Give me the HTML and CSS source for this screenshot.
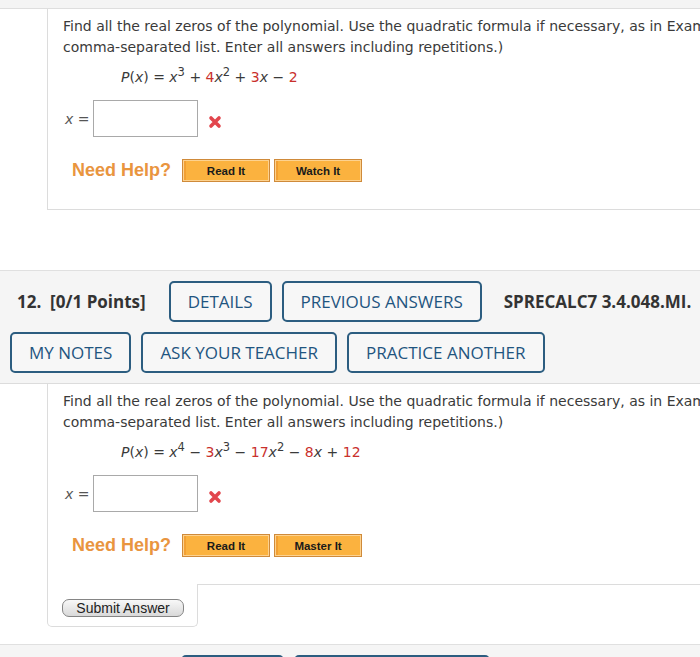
FILE: index.html
```html
<!DOCTYPE html>
<html>
<head>
<meta charset="utf-8">
<link rel="stylesheet" href="styles.css">
</head>
<body>
<div class="page">
  <div class="topband"></div>

  <div class="qbody">
    <div class="panel">
      <p class="prompt">Find all the real zeros of the polynomial. Use the quadratic formula if necessary, as in Example 3(a). (Enter your answers as a<br>comma-separated list. Enter all answers including repetitions.)</p>
      <div class="formula"><i>P</i>(<i>x</i>) = <i>x</i><span class="sup">3</span> + <span class="num">4</span><i>x</i><span class="sup">2</span> + <span class="num">3</span><i>x</i> − <span class="num">2</span></div>
      <div class="answer">
        <span class="label"><i>x</i> =</span>
        <span class="input"></span>
        <svg class="xmark" width="14" height="14" viewBox="0 0 14 14"><path d="M3 3 L11 11 M11 3 L3 11" stroke="#e2464d" stroke-width="3.6" stroke-linecap="round"/></svg>
      </div>
      <div class="help">
        <span class="needhelp">Need Help?</span>
        <span class="hbtn">Read It</span>
        <span class="hbtn">Watch It</span>
      </div>
    </div>
  </div>

  <div class="qhead first">
    <div class="hrow">
      <span class="qnum">12.&nbsp; [0/1 Points]</span>
      <span class="btn">DETAILS</span>
      <span class="btn">PREVIOUS ANSWERS</span>
      <span class="qid">SPRECALC7 3.4.048.MI.</span>
    </div>
    <div class="hrow">
      <span class="btn">MY NOTES</span>
      <span class="btn">ASK YOUR TEACHER</span>
      <span class="btn">PRACTICE ANOTHER</span>
    </div>
  </div>

  <div class="qbody">
    <div class="panel open">
      <p class="prompt">Find all the real zeros of the polynomial. Use the quadratic formula if necessary, as in Example 3(a). (Enter your answers as a<br>comma-separated list. Enter all answers including repetitions.)</p>
      <div class="formula"><i>P</i>(<i>x</i>) = <i>x</i><span class="sup">4</span> − <span class="num">3</span><i>x</i><span class="sup">3</span> − <span class="num">17</span><i>x</i><span class="sup">2</span> − <span class="num">8</span><i>x</i> + <span class="num">12</span></div>
      <div class="answer">
        <span class="label"><i>x</i> =</span>
        <span class="input"></span>
        <svg class="xmark" width="14" height="14" viewBox="0 0 14 14"><path d="M3 3 L11 11 M11 3 L3 11" stroke="#e2464d" stroke-width="3.6" stroke-linecap="round"/></svg>
      </div>
      <div class="help">
        <span class="needhelp">Need Help?</span>
        <span class="hbtn">Read It</span>
        <span class="hbtn">Master It</span>
      </div>
    </div>
    <div class="qfoot">
      <div class="tab"><span class="submit">Submit Answer</span></div>
      <div class="fill"></div>
    </div>
  </div>

  <div class="qhead next">
    <div class="hrow">
      <span class="qnum wide">13.&nbsp; [-/1 Points]</span>
      <span class="btn">DETAILS</span>
      <span class="btn">ASK YOUR TEACHER</span>
    </div>
  </div>
</div>
</body>
</html>
```
FILE: styles.css
```css
html, body {
  margin: 0;
  padding: 0;
  overflow: hidden;
  background: #ffffff;
}

.page {
  width: 1000px;
  font-family: "DejaVu Sans", Verdana, sans-serif;
  color: #3a3a3a;
}

.topband {
  height: 8px;
  background: #f4f4f4;
  border-bottom: 1px solid #dedede;
}

.qbody {
  margin-left: 47px;
}

.panel {
  border-left: 1px solid #dcdcdc;
  border-bottom: 1px solid #dcdcdc;
  padding: 7px 0 27px 15px;
}

.panel.open {
  border-bottom: none;
}

.prompt {
  margin: 0;
  font-size: 14px;
  line-height: 21px;
  white-space: nowrap;
}

.formula {
  margin: 8px 0 0 58px;
  font-size: 14px;
  line-height: 22px;
  height: 22px;
  white-space: nowrap;
}

.formula i {
  font-style: italic;
}

.num {
  color: #c9302c;
}

.sup {
  font-size: 11.5px;
  position: relative;
  top: -6px;
}

.answer {
  display: flex;
  align-items: center;
  margin-top: 12px;
  height: 37px;
}

.label {
  width: 28px;
  margin-left: 2px;
  font-size: 14px;
  color: #555;
}

.input {
  width: 105px;
  height: 37px;
  box-sizing: border-box;
  border: 1px solid #a9a9a9;
  background: #fff;
}

.xmark {
  margin-left: 10px;
  margin-top: 6px;
}

.help {
  display: flex;
  align-items: center;
  margin-top: 22px;
  height: 23px;
}

.needhelp {
  margin-left: 9px;
  margin-right: 11px;
  font-family: "Liberation Sans", Arial, sans-serif;
  font-weight: 700;
  font-size: 18px;
  color: #e9953f;
}

.hbtn {
  width: 88px;
  height: 23px;
  box-sizing: border-box;
  margin-right: 4px;
  display: flex;
  align-items: center;
  justify-content: center;
  border: 1px solid #cf8a3a;
  background: #fbb23f;
  box-shadow: inset 0 0 0 1px #fdd28f, inset 3px 0 0 0 #f2a033;
  font-family: "Liberation Sans", Arial, sans-serif;
  font-weight: 700;
  font-size: 11.5px;
  color: #1a1a1a;
}

.qfoot {
  display: flex;
}

.tab {
  width: 151px;
  box-sizing: border-box;
  border: 1px solid #dcdcdc;
  border-top: none;
  border-radius: 0 0 5px 5px;
  padding: 15px 0 9px 14px;
}

.submit {
  display: block;
  width: 122px;
  height: 18px;
  box-sizing: border-box;
  border: 1px solid #858585;
  border-radius: 7px;
  background: linear-gradient(#f8f8f8, #d9d9d9);
  font-family: "Liberation Sans", Arial, sans-serif;
  font-size: 14px;
  line-height: 16px;
  text-align: center;
  color: #222;
}

.fill {
  flex: 1;
  border-top: 1px solid #dcdcdc;
}

.qhead {
  background: #f5f5f5;
  border-top: 1px solid #e0e0e0;
  border-bottom: 1px solid #dcdcdc;
  padding: 10px;
  display: flex;
  flex-direction: column;
  gap: 10px;
  font-family: "Open Sans", sans-serif;
}

.qhead.first {
  margin-top: 60px;
}

.qhead.next {
  margin-top: 17px;
}

.hrow {
  display: flex;
  align-items: center;
  gap: 10px;
}

.qnum {
  margin-left: 7px;
  margin-right: 13px;
  font-weight: 700;
  font-size: 17px;
  color: #333;
}

.qnum.wide {
  margin-right: 30px;
}

.qid {
  margin-left: 12px;
  font-weight: 700;
  font-size: 17px;
  color: #333;
}

.btn {
  height: 41px;
  box-sizing: border-box;
  padding: 0 17px;
  display: flex;
  align-items: center;
  border: 2px solid #2c5d80;
  border-radius: 5px;
  font-size: 17px;
  color: #1f5580;
  background: #f7f7f7;
}
```
